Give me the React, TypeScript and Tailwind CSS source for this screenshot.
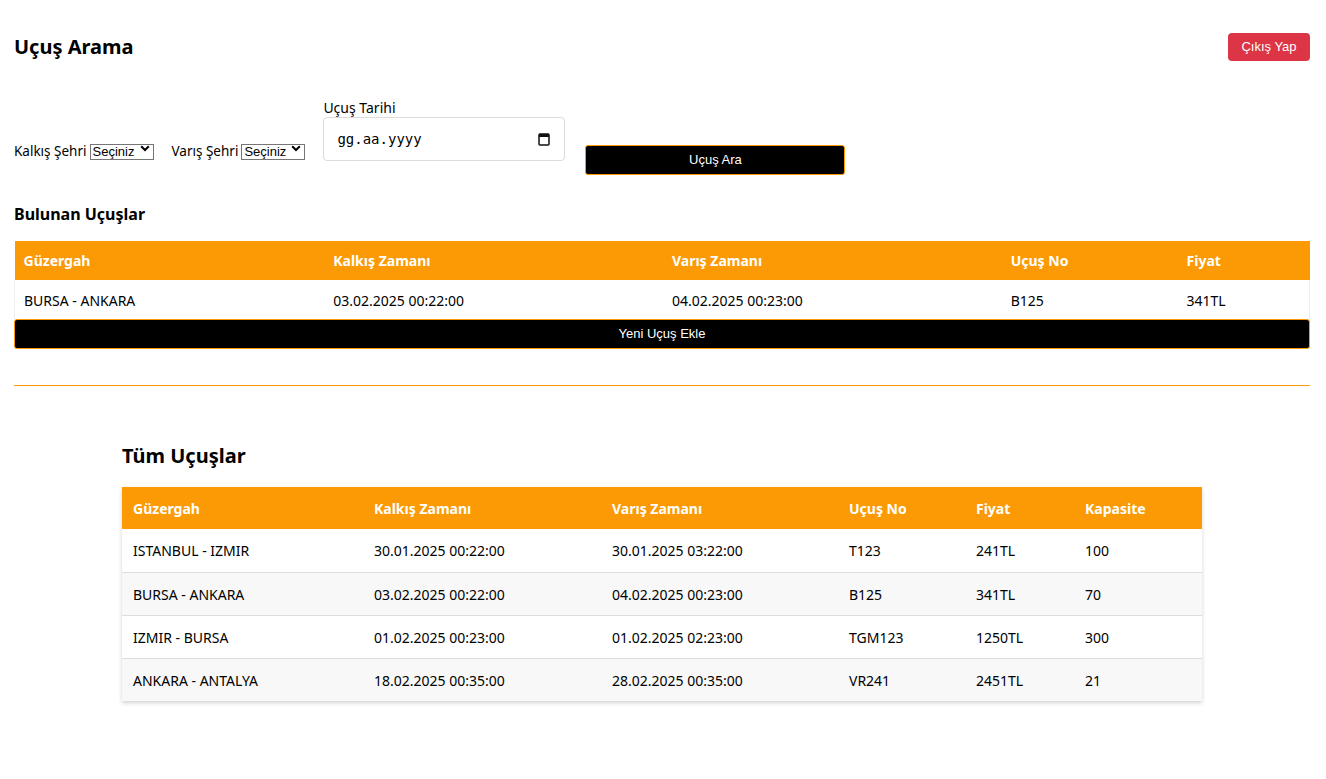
import React from "react";

const ORANGE = "bg-[#fc9a05]";

function Chevron() {
  return (
    <svg width="10" height="7" viewBox="0 0 10 7" className="pointer-events-none absolute right-[4px] top-[5px]">
      <path d="M1.2 1.2L5 5l3.8-3.8" fill="none" stroke="#000" strokeWidth="2" />
    </svg>
  );
}

function FakeSelect() {
  return (
    <span className="relative inline-block">
      <select
        className="appearance-none border border-[#767676] bg-white pl-[2px] pr-[17px] w-[64px] h-[16px] leading-[14px] text-[13px] text-black"
        style={{ fontFamily: '"Liberation Sans", Arial, sans-serif' }}
        defaultValue=""
      >
        <option value="">Seçiniz</option>
      </select>
      <Chevron />
    </span>
  );
}

function CalendarIcon() {
  return (
    <svg width="12" height="14" viewBox="0 0 12 14">
      <rect x="1" y="2" width="10" height="11" rx="1" fill="none" stroke="#111" strokeWidth="1.5" />
      <rect x="1" y="2" width="10" height="3" fill="#111" />
    </svg>
  );
}

const found = [["BURSA - ANKARA", "03.02.2025 00:22:00", "04.02.2025 00:23:00", "B125", "341TL"]];
const all = [
  ["ISTANBUL - IZMIR", "30.01.2025 00:22:00", "30.01.2025 03:22:00", "T123", "241TL", "100"],
  ["BURSA - ANKARA", "03.02.2025 00:22:00", "04.02.2025 00:23:00", "B125", "341TL", "70"],
  ["IZMIR - BURSA", "01.02.2025 00:23:00", "01.02.2025 02:23:00", "TGM123", "1250TL", "300"],
  ["ANKARA - ANTALYA", "18.02.2025 00:35:00", "28.02.2025 00:35:00", "VR241", "2451TL", "21"],
];

export default function App() {
  const font = { fontFamily: '"Noto Sans", "Open Sans", sans-serif' };
  const arial = { fontFamily: '"Liberation Sans", Arial, sans-serif' };
  const w1 = ["w-[310px]", "w-[339px]", "w-[339px]", "w-[176px]", "w-[132px]"];
  const w2 = ["w-[241px]", "w-[238px]", "w-[237px]", "w-[127px]", "w-[109px]", "w-[128px]"];
  return (
    <div className="min-h-[779px] w-[1324px] bg-white text-black text-[14px]" style={font}>
      <div className="px-[14px]">
        <div className="flex items-center justify-between pt-[33px]">
          <h1 className="text-[20px] font-bold leading-[28px]">Uçuş Arama</h1>
          <button
            className="h-[28px] w-[82px] rounded-[4px] bg-[#dc3545] text-[13px] text-white"
            style={arial}
          >
            Çıkış Yap
          </button>
        </div>

        <div className="mt-[37px] flex items-end">
          <div className="mb-[14px] flex items-center gap-[3px]">
            <span className="text-[13.5px] leading-[18px]">Kalkış Şehri</span>
            <FakeSelect />
          </div>
          <div className="mb-[14px] ml-[18px] flex items-center gap-[3px]">
            <span className="text-[13.5px] leading-[18px]">Varış Şehri</span>
            <FakeSelect />
          </div>
          <div className="mb-[14px] ml-[18px] flex flex-col">
            <span className="leading-[18px] pt-[1px]">Uçuş Tarihi</span>
            <div className="flex h-[44px] w-[242px] items-center justify-between rounded-[4px] border border-[#dcdcdc] pl-[13px] pr-[14px]">
              <span className="text-[14px]" style={{ fontFamily: '"DejaVu Sans Mono", monospace' }}>
                gg.aa.yyyy
              </span>
              <CalendarIcon />
            </div>
          </div>
          <button
            className="ml-[20px] h-[30px] w-[260px] rounded-[3px] border border-[#fc9a05] bg-black text-[13px] text-white"
            style={arial}
          >
            Uçuş Ara
          </button>
        </div>

        <h2 className="mt-[27px] text-[16px] font-bold leading-[24px]">Bulunan Uçuşlar</h2>

        <table className="mt-[15px] w-full border-collapse">
          <thead>
            <tr className={`${ORANGE} text-white h-[39px]`}>
              {["Güzergah", "Kalkış Zamanı", "Varış Zamanı", "Uçuş No", "Fiyat"].map((h, i) => (
                <th key={h} className={`${w1[i]} px-[9px] text-left font-bold text-[14px]`}>
                  {h}
                </th>
              ))}
            </tr>
          </thead>
          <tbody>
            {found.map((r, ri) => (
              <tr key={ri} className="h-[39px] border-x border-[#eeeeee] bg-white">
                {r.map((c, i) => (
                  <td key={i} className="px-[9px] pt-[1px]">
                    {c}
                  </td>
                ))}
              </tr>
            ))}
          </tbody>
        </table>
        <button
          className="block h-[30px] w-full rounded-[3px] border border-[#fc9a05] bg-black text-[13px] text-white"
          style={arial}
        >
          Yeni Uçuş Ekle
        </button>

        <div className="mt-[36px] h-px w-full bg-[#fc9a05]" />
      </div>

      <div className="mx-auto mt-[56px] w-[1080px] pb-[80px]">
        <h2 className="text-[20px] font-bold leading-[28px]">Tüm Uçuşlar</h2>
        <table className="mt-[17px] w-full border-collapse shadow-[0_2px_4px_rgba(0,0,0,0.18)]">
          <thead>
            <tr className={`${ORANGE} text-white h-[42px]`}>
              {["Güzergah", "Kalkış Zamanı", "Varış Zamanı", "Uçuş No", "Fiyat", "Kapasite"].map((h, i) => (
                <th key={h} className={`${w2[i]} px-[11px] text-left font-bold text-[14px]`}>
                  {h}
                </th>
              ))}
            </tr>
          </thead>
          <tbody>
            {all.map((r, ri) => (
              <tr
                key={ri}
                className={`h-[43px] ${ri % 2 === 1 ? "bg-[#f8f8f8]" : "bg-white"} ${ri < all.length - 1 ? "border-b border-[#dddddd]" : ""}`}
              >
                {r.map((c, i) => (
                  <td key={i} className="px-[11px] pt-[1px]">
                    {c}
                  </td>
                ))}
              </tr>
            ))}
          </tbody>
        </table>
      </div>
    </div>
  );
}
